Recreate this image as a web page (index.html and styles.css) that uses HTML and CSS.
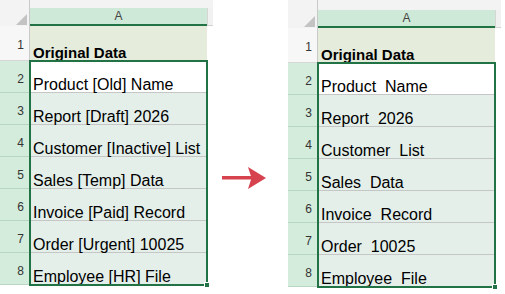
FILE: index.html
```html
<!DOCTYPE html>
<html>
<head>
<meta charset="utf-8">
<link rel="stylesheet" href="styles.css">
</head>
<body>
<div class="page">
  <div class="sheet">
    <div class="band c0"></div><div class="band"></div><div class="band"></div>
    <div class="corner c0"><svg width="11" height="11" viewBox="0 0 11 11"><polygon points="11,0 11,11 0,11" fill="#c3c3c3"/></svg></div>
    <div class="colhead">A</div>
    <div class="stubhead"></div>
    <div class="rh rh1">1</div><div class="cell title">Original Data</div><div class="stub"></div>
    <div class="rh">2</div><div class="cell active">Product [Old] Name</div><div class="stub"></div>
    <div class="rh">3</div><div class="cell">Report [Draft] 2026</div><div class="stub"></div>
    <div class="rh">4</div><div class="cell">Customer [Inactive] List</div><div class="stub"></div>
    <div class="rh">5</div><div class="cell">Sales [Temp] Data</div><div class="stub"></div>
    <div class="rh">6</div><div class="cell">Invoice [Paid] Record</div><div class="stub"></div>
    <div class="rh">7</div><div class="cell">Order [Urgent] 10025</div><div class="stub"></div>
    <div class="rh">8</div><div class="cell">Employee [HR] File</div><div class="stub"></div>
    <div class="selection"><span class="handle"></span></div>
  </div>
  <div class="gap">
    <svg class="arrow" width="45" height="24" viewBox="0 0 45 24"><rect x="0" y="10" width="31" height="3.5" fill="#d6434f"/><polygon points="26,1 44,12 26,23 29.5,12" fill="#d6434f"/></svg>
  </div>
  <div class="sheet sheet-right">
    <div class="band c0"></div><div class="band"></div><div class="band"></div>
    <div class="corner c0"><svg width="11" height="11" viewBox="0 0 11 11"><polygon points="11,0 11,11 0,11" fill="#c3c3c3"/></svg></div>
    <div class="colhead">A</div>
    <div class="stubhead"></div>
    <div class="rh rh1">1</div><div class="cell title">Original Data</div><div class="stub"></div>
    <div class="rh">2</div><div class="cell active">Product  Name</div><div class="stub"></div>
    <div class="rh">3</div><div class="cell">Report  2026</div><div class="stub"></div>
    <div class="rh">4</div><div class="cell">Customer  List</div><div class="stub"></div>
    <div class="rh">5</div><div class="cell">Sales  Data</div><div class="stub"></div>
    <div class="rh">6</div><div class="cell">Invoice  Record</div><div class="stub"></div>
    <div class="rh">7</div><div class="cell">Order  10025</div><div class="stub"></div>
    <div class="rh">8</div><div class="cell">Employee  File</div><div class="stub"></div>
    <div class="selection"><span class="handle"></span></div>
  </div>
</div>
</body>
</html>
```
FILE: styles.css
```css
* { box-sizing: border-box; }
html, body { margin: 0; padding: 0; background: #ffffff; }
body { font-family: "Liberation Sans", Arial, sans-serif; width: 505px; height: 294px; overflow: hidden; }
.page { display: flex; align-items: flex-start; }

.sheet {
  position: relative;
  display: grid;
  grid-template-columns: 30px 177px 6px;
  grid-template-rows: 8px 18px 35px repeat(7, 32px) 3px;
}
.sheet-right { grid-template-rows: 10px 18px 35px repeat(7, 32px) 3px; }

.band { background: #f3f3f3; }
.c0 { border-right: 1px solid #c9c9c9; }
.corner {
  background: #f3f3f3;
  display: flex; justify-content: flex-end; align-items: flex-end;
  padding: 0 2px 1px 0;
}
.corner svg { display: block; }
.colhead {
  background: #cfe9d8;
  border-bottom: 2px solid #217346;
  color: #444;
  font-size: 12px;
  line-height: 16px;
  text-align: center;
}
.stubhead { background: #f1f1f1; border-bottom: 1px solid #d3d3d3; border-left: 1px solid #d6d6d6; }

.rh {
  background: #d3ecdc;
  border-right: 1px solid #c9c9c9;
  border-bottom: 1px solid #b9d6c3;
  color: #333;
  font-size: 12px;
  line-height: 12px;
  padding-right: 5px;
  display: flex; align-items: flex-end; justify-content: flex-end;
  padding-bottom: 7px;
}
.rh1 { background: #f7f7f7; border-bottom: 1px solid #d6d6d6; padding-bottom: 9px; }

.cell {
  background: #e4efea;
  border-bottom: 1px solid #c6c6c6;
  color: #000;
  font-size: 16px;
  line-height: 12px;
  padding-left: 3px;
  white-space: pre;
  display: flex; align-items: flex-end;
  padding-bottom: 1px;
}
.cell.title {
  background: #e6ecdc;
  font-weight: bold;
  font-size: 15px;
  padding-bottom: 2px;
  border-bottom: none;
}
.cell.active { background: #ffffff; }
.stub { background: #ffffff; }

.selection {
  position: absolute;
  left: 29px;
  top: 60px;
  width: 179px;
  height: 226px;
  border: 2px solid #217346;
}
.sheet-right .selection { top: 62px; }
.handle {
  position: absolute;
  right: -4px; bottom: -4px;
  width: 6px; height: 6px;
  background: #217346;
  border: 1px solid #ffffff;
}

.gap { width: 75px; padding-left: 9px; }
.arrow { display: block; margin-top: 166px; }
```
